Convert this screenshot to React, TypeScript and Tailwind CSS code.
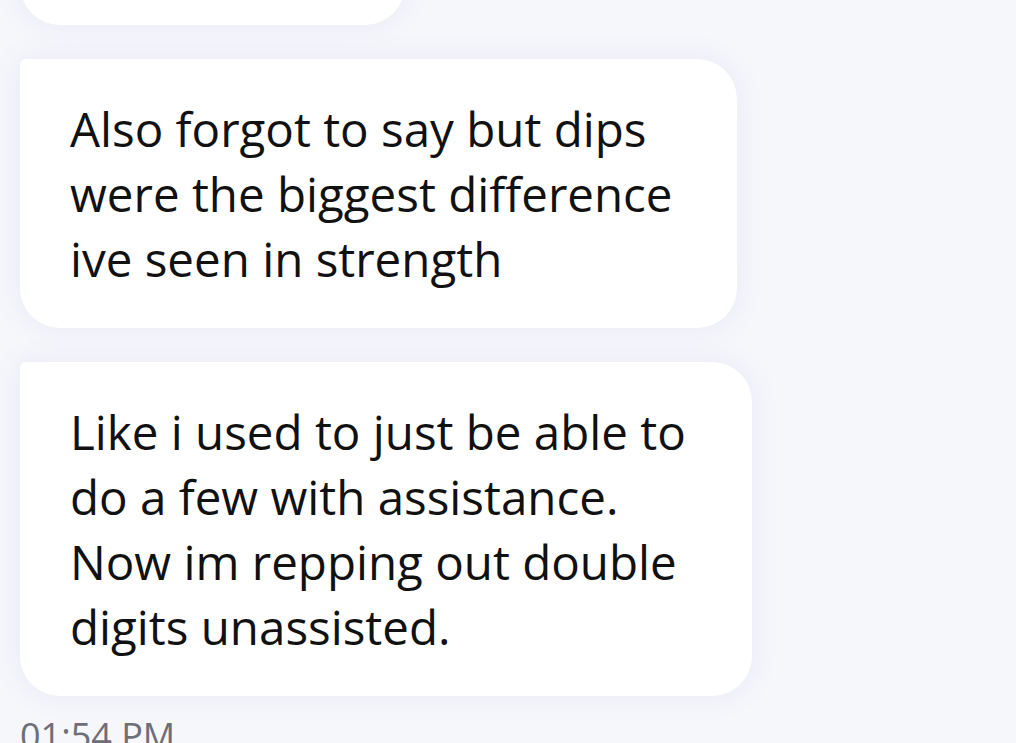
import React from 'react';

const bubble =
  "bg-white rounded-[40px] shadow-[0_0_28px_rgba(120,120,200,0.10)] pl-[50px] text-[#111111] text-[47.5px] leading-[65px]";

const Bubble: React.FC<{ lines: string[]; className?: string }> = ({ lines, className }) => (
  <div className={`${bubble} rounded-tl-[6px] ${className ?? ''}`}>
    {lines.map((l) => (
      <div key={l} className="whitespace-nowrap">{l}</div>
    ))}
  </div>
);

export default function App() {
  return (
    <div
      className="w-[1016px] h-[743px] overflow-hidden bg-[#f6f7fb]"
      style={{ fontFamily: '"Open Sans", "Noto Sans", sans-serif' }}
    >
      <div className="flex flex-col items-start gap-[34px] pl-[20px]">
        <div className="bg-white rounded-[40px] shadow-[0_0_28px_rgba(120,120,200,0.10)] w-[385px] h-[120px] -mt-[95px]" />
        <Bubble
          className="w-[717px] py-[37px]"
          lines={['Also forgot to say but dips', 'were the biggest difference', 'ive seen in strength']}
        />
        <Bubble
          className="w-[732px] py-[37px]"
          lines={[
            'Like i used to just be able to',
            'do a few with assistance.',
            'Now im repping out double',
            'digits unassisted.',
          ]}
        />
      </div>
      <div className="pl-[20px] mt-[20px] text-[36px] leading-[40px] text-[#6e6e78]">01:54 PM</div>
    </div>
  );
}
